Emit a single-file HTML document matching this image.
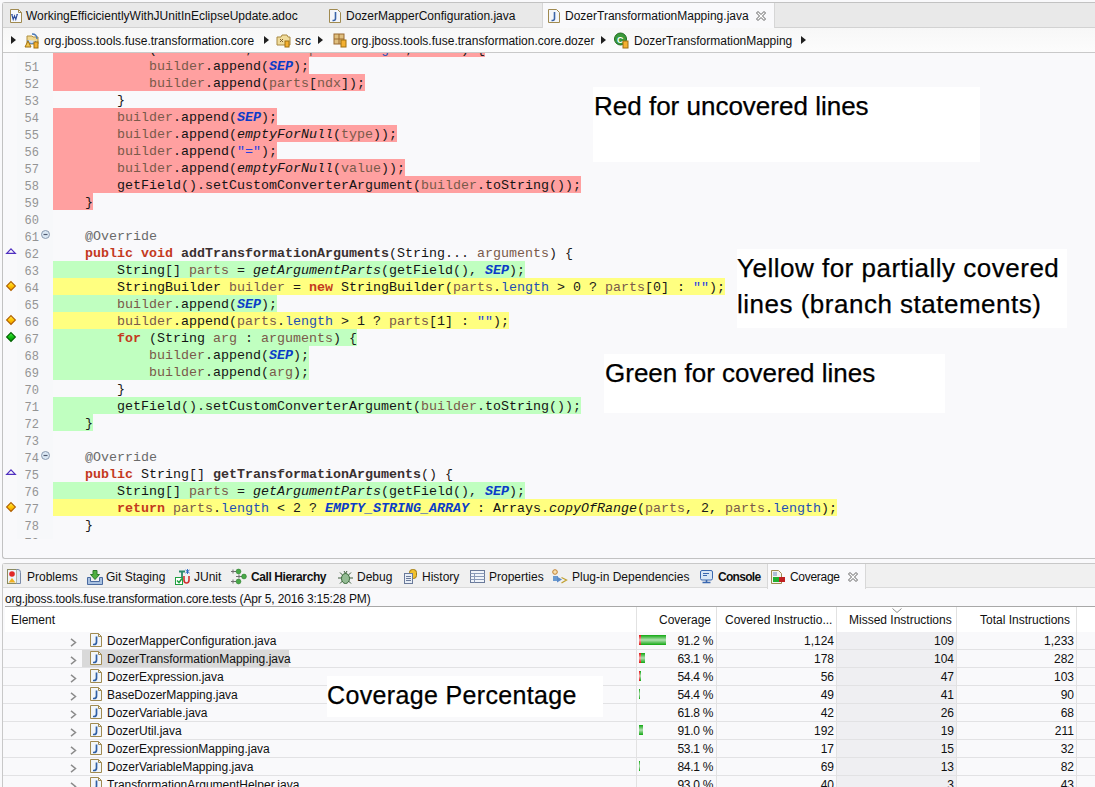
<!DOCTYPE html>
<html><head><meta charset="utf-8">
<style>
*{box-sizing:border-box}
html,body{margin:0;padding:0}
body{width:1095px;height:787px;overflow:hidden;position:relative;background:#f9f9fb;font-family:"Liberation Sans",sans-serif;font-size:12px;color:#101010}
.a{position:absolute}
svg{position:absolute;overflow:visible}
/* editor frame */
#edframe{position:absolute;left:2px;top:2px;width:1200px;height:557px;border:1px solid #c2c2c2;border-right:none;border-radius:3px 0 0 3px;background:#f9f9fb}
#tabbar{position:absolute;left:3px;top:3px;width:1200px;height:25px;background:#e9e9e9;border-bottom:1px solid #d2d2d2}
.tab{position:absolute;top:1px;height:25px;line-height:25px;white-space:nowrap}
#acttab{position:absolute;left:542px;top:3px;width:233px;height:25px;background:#f9f9fb;border-left:1px solid #d6d6d6;border-right:1px solid #d6d6d6}
#crumb{position:absolute;left:3px;top:28px;width:1200px;height:25px;background:linear-gradient(#f7f7f7,#fcfcfc);border-bottom:1px solid #c9c9c9}
.crt{position:absolute;top:1px;height:25px;line-height:25px;white-space:nowrap}
.tri{position:absolute;width:0;height:0;border-top:4px solid transparent;border-bottom:4px solid transparent;border-left:5px solid #202020}
/* code */
#code{position:absolute;left:3px;top:53px;width:1200px;height:486px;overflow:hidden}
#ruler{position:absolute;left:14px;top:0;width:36px;height:486px;background:#f7f8fa}
.ln{position:absolute;left:0;height:17px;width:1200px;font-family:"Liberation Mono",monospace;font-size:13.333px;line-height:17px;white-space:pre}
.ln .num{position:absolute;left:0;top:3px;width:36px;text-align:right;color:#949494;font-size:12px}
.ln .tx{position:absolute;left:50px;top:0;display:inline-block;height:17px;padding-top:1px;color:#1a1a1a}
.cr .tx{background:#ffa0a0}
.cg .tx{background:#c0ffc0}
.cy .tx{background:#ffff80}
.kw{color:#c43a1e;font-weight:bold}
.lv{color:#7a5a4a}
.ty{color:#141414}
.md{color:#141414}
.mdecl{color:#3a3030;font-weight:bold}
.sm{font-style:italic;color:#141414}
.sf{font-style:italic;font-weight:bold;color:#0a3cc8}
.fd{color:#1e50b4}
.str{color:#2a40e0}
.an{color:#6a6a6a}
/* annotations */
.note{position:absolute;background:#fff;font-family:"Liberation Sans",sans-serif;font-size:26px;color:#000;white-space:nowrap;-webkit-text-stroke:0.25px #000}
/* bottom panel */
#pframe{position:absolute;left:2px;top:563px;width:1200px;height:300px;border:1px solid #c8c8c8;border-right:none;border-radius:3px 0 0 0;background:#f9f9fb}
#ptabbar{position:absolute;left:3px;top:564px;width:1200px;height:24px;background:#f0f0f0;border-bottom:1px solid #dadada}
#pacttab{position:absolute;left:767px;top:564px;width:99px;height:25px;background:#f9f9fb;border-left:1px solid #d8d8d8;border-right:1px solid #d8d8d8}
.pt{position:absolute;top:565px;height:24px;line-height:24px;white-space:nowrap}
#desc{position:absolute;left:5px;top:589px;width:1200px;height:18px;line-height:20px;padding-left:0px;letter-spacing:-0.16px;border-bottom:1px solid #a8a8a8;background:#f9f9fb}
#thead{position:absolute;left:5px;top:607px;width:1200px;height:25px;background:#fff}
.th{position:absolute;top:608px;height:25px;line-height:25px;white-space:nowrap}
.vsep{position:absolute;width:1px;background:#e2e2e2}
#sortcol{position:absolute;left:837px;top:632px;width:119px;height:160px;background:#efeff2}
.row{position:absolute;left:3px;width:1200px;height:18px;border-bottom:1px solid #e2e2e4;white-space:nowrap}
.row > *{position:absolute}
.exp{left:67px;top:6px}
.jic{left:87px;top:1px}
.fname{left:104px;top:1px;line-height:17px;padding:0 1px 0 0}
.selbg{left:79px;top:0;width:207px;height:17px;background:#d9d9d9}
.bar{left:636px;top:3px;height:10px;background:linear-gradient(#10a810,#b0e0b0 50%,#10a810)}
.bar .red{position:absolute;left:0;top:0;height:10px;background:linear-gradient(#e01010,#f8b0b0 50%,#e01010)}
.c1,.c2,.c3,.c4{top:1px;line-height:17px;text-align:right}
.c1{left:633px;width:77px;letter-spacing:-0.3px}
.c2{left:713px;width:118px}
.c3{left:833px;width:118px}
.c4{left:953px;width:118px}
</style></head><body>
<svg width="0" height="0" style="position:absolute"><defs><linearGradient id="gy" x1="0" y1="0" x2="0" y2="1"><stop offset="0" stop-color="#ffe860"/><stop offset="0.5" stop-color="#ffc800"/><stop offset="1" stop-color="#f09000"/></linearGradient><linearGradient id="gg" x1="0" y1="0" x2="0" y2="1"><stop offset="0" stop-color="#50f050"/><stop offset="0.5" stop-color="#10c010"/><stop offset="1" stop-color="#008a00"/></linearGradient></defs></svg>
<div id="edframe"></div>
<div id="tabbar"></div>
<div id="acttab"></div>
<!-- tabs -->
<svg style="left:10px;top:9px" width="12" height="14" viewBox="0 0 12 14"><path d="M0.5 0.5h8l3 3v10h-11z" fill="#f6f8fc" stroke="#a08a50"/><path d="M8.5 0.5v3h3" fill="none" stroke="#a08a50"/><path d="M1.8 5.5l1.4 5 1.3-3.6 1.3 3.6 1.4-5" fill="none" stroke="#2a4a9a" stroke-width="1.1"/><path d="M1.2 5.5h1.5M6.5 5.5h1.5" stroke="#2a4a9a" stroke-width="0.8"/></svg>
<div class="tab" style="left:26px;top:4px">WorkingEfficicientlyWithJUnitInEclipseUpdate.adoc</div>
<svg style="left:329px;top:9px" width="12" height="14" viewBox="0 0 12 14"><path d="M0.5 0.5h8l3 3v10h-11z" fill="#f4f6fa" stroke="#a08a50"/><path d="M6.5 3v6.5q0 2-2 2h-1" fill="none" stroke="#3a64a8" stroke-width="1.6"/></svg>
<div class="tab" style="left:346px;top:4px">DozerMapperConfiguration.java</div>
<svg style="left:548px;top:9px" width="12" height="14" viewBox="0 0 12 14"><path d="M0.5 0.5h8l3 3v10h-11z" fill="#f4f6fa" stroke="#a08a50"/><path d="M6.5 3v6.5q0 2-2 2h-1" fill="none" stroke="#3a64a8" stroke-width="1.6"/></svg>
<div class="tab" style="left:565px;top:4px">DozerTransformationMapping.java</div>
<svg style="left:756px;top:11px" width="10" height="10" viewBox="0 0 10 10"><path d="M0.5 2l1.5-1.5 3 3 3-3 1.5 1.5-3 3 3 3-1.5 1.5-3-3-3 3-1.5-1.5 3-3z" fill="#fff" stroke="#606060" stroke-width="1"/></svg>
<!-- breadcrumb -->
<div id="crumb"></div>
<div class="tri" style="left:11px;top:36px"></div>
<svg style="left:24px;top:32px" width="16" height="16" viewBox="0 0 16 16"><path d="M3 4h5l1 1h5v7h-11z" fill="#f0d890" stroke="#b09040"/><path d="M8 2q5 0 5 5" fill="none" stroke="#4a7ab8" stroke-width="1.3"/><path d="M4 8a4 3 0 0 0 8 1" fill="#cfe0f4" stroke="#4a7ab8"/><path d="M1 15l3-6 3 6z" fill="#f4c850" stroke="#a07010"/><rect x="10" y="10" width="4" height="6" fill="#f4b030" stroke="#a07010"/></svg>
<div class="crt" style="left:44px;top:29px">org.jboss.tools.fuse.transformation.core</div>
<div class="tri" style="left:264px;top:36px"></div>
<svg style="left:276px;top:33px" width="15" height="14" viewBox="0 0 15 14"><path d="M1 4h4l1-2h5l1 2h2v8h-13z" fill="#f0dc9c" stroke="#a88840"/><path d="M4 6l3 3M7 6l-3 3" stroke="#806030"/><rect x="9" y="8" width="4" height="6" fill="#f4b030" stroke="#a07010"/></svg>
<div class="crt" style="left:295px;top:29px">src</div>
<div class="tri" style="left:318px;top:36px"></div>
<svg style="left:333px;top:33px" width="14" height="14" viewBox="0 0 14 14"><rect x="1" y="1" width="10" height="10" fill="#e0c080" stroke="#9a6a30"/><path d="M1 6h10M6 1v10" stroke="#9a6a30"/><rect x="8" y="7" width="5" height="7" fill="#f4b030" stroke="#a07010"/></svg>
<div class="crt" style="left:351px;top:29px">org.jboss.tools.fuse.transformation.core.dozer</div>
<div class="tri" style="left:601px;top:36px"></div>
<svg style="left:614px;top:32px" width="15" height="16" viewBox="0 0 15 16"><circle cx="6.5" cy="7" r="6" fill="#3a9a3a" stroke="#206a20"/><text x="3" y="11" font-size="9" font-weight="bold" font-family="Liberation Sans" fill="#fff">C</text><rect x="9" y="9" width="5" height="7" fill="#f4b030" stroke="#a07010"/></svg>
<div class="crt" style="left:634px;top:29px">DozerTransformationMapping</div>
<div class="tri" style="left:801px;top:36px"></div>
<!-- code -->
<div id="code">
<div id="ruler"></div>
<div class="ln cr" style="top:-13px"><span class="tx">        <span class="kw">for</span> (<span class="kw">int</span> <span class="lv">ndx</span> = 2; <span class="lv">ndx</span> &lt; <span class="lv">parts</span>.<span class="fd">length</span>; <span class="lv">ndx</span>++) {</span></div>
<div class="ln cr" style="top:4px"><span class="num">51</span><span class="tx">            <span class="lv">builder</span>.<span class="md">append</span>(<span class="sf">SEP</span>);</span></div>
<div class="ln cr" style="top:21px"><span class="num">52</span><span class="tx">            <span class="lv">builder</span>.<span class="md">append</span>(<span class="lv">parts</span>[<span class="lv">ndx</span>]);</span></div>
<div class="ln" style="top:38px"><span class="num">53</span><span class="tx">        }</span></div>
<div class="ln cr" style="top:55px"><span class="num">54</span><span class="tx">        <span class="lv">builder</span>.<span class="md">append</span>(<span class="sf">SEP</span>);</span></div>
<div class="ln cr" style="top:72px"><span class="num">55</span><span class="tx">        <span class="lv">builder</span>.<span class="md">append</span>(<span class="sm">emptyForNull</span>(<span class="lv">type</span>));</span></div>
<div class="ln cr" style="top:89px"><span class="num">56</span><span class="tx">        <span class="lv">builder</span>.<span class="md">append</span>(<span class="str">&quot;=&quot;</span>);</span></div>
<div class="ln cr" style="top:106px"><span class="num">57</span><span class="tx">        <span class="lv">builder</span>.<span class="md">append</span>(<span class="sm">emptyForNull</span>(<span class="lv">value</span>));</span></div>
<div class="ln cr" style="top:123px"><span class="num">58</span><span class="tx">        <span class="md">getField</span>().<span class="md">setCustomConverterArgument</span>(<span class="lv">builder</span>.<span class="md">toString</span>());</span></div>
<div class="ln cr" style="top:140px"><span class="num">59</span><span class="tx">    }</span></div>
<div class="ln" style="top:157px"><span class="num">60</span><span class="tx"></span></div>
<div class="ln" style="top:174px"><span class="num">61</span><span class="tx">    <span class="an">@Override</span></span></div>
<div class="ln" style="top:191px"><span class="num">62</span><span class="tx">    <span class="kw">public</span> <span class="kw">void</span> <span class="mdecl">addTransformationArguments</span>(<span class="ty">String</span>... <span class="lv">arguments</span>) {</span></div>
<div class="ln cg" style="top:208px"><span class="num">63</span><span class="tx">        <span class="ty">String</span>[] <span class="lv">parts</span> = <span class="sm">getArgumentParts</span>(<span class="md">getField</span>(), <span class="sf">SEP</span>);</span></div>
<div class="ln cy" style="top:225px"><span class="num">64</span><span class="tx">        <span class="ty">StringBuilder</span> <span class="lv">builder</span> = <span class="kw">new</span> <span class="ty">StringBuilder</span>(<span class="lv">parts</span>.<span class="fd">length</span> &gt; 0 ? <span class="lv">parts</span>[0] : <span class="str">&quot;&quot;</span>);</span></div>
<div class="ln cg" style="top:242px"><span class="num">65</span><span class="tx">        <span class="lv">builder</span>.<span class="md">append</span>(<span class="sf">SEP</span>);</span></div>
<div class="ln cy" style="top:259px"><span class="num">66</span><span class="tx">        <span class="lv">builder</span>.<span class="md">append</span>(<span class="lv">parts</span>.<span class="fd">length</span> &gt; 1 ? <span class="lv">parts</span>[1] : <span class="str">&quot;&quot;</span>);</span></div>
<div class="ln cg" style="top:276px"><span class="num">67</span><span class="tx">        <span class="kw">for</span> (<span class="ty">String</span> <span class="lv">arg</span> : <span class="lv">arguments</span>) {</span></div>
<div class="ln cg" style="top:293px"><span class="num">68</span><span class="tx">            <span class="lv">builder</span>.<span class="md">append</span>(<span class="sf">SEP</span>);</span></div>
<div class="ln cg" style="top:310px"><span class="num">69</span><span class="tx">            <span class="lv">builder</span>.<span class="md">append</span>(<span class="lv">arg</span>);</span></div>
<div class="ln" style="top:327px"><span class="num">70</span><span class="tx">        }</span></div>
<div class="ln cg" style="top:344px"><span class="num">71</span><span class="tx">        <span class="md">getField</span>().<span class="md">setCustomConverterArgument</span>(<span class="lv">builder</span>.<span class="md">toString</span>());</span></div>
<div class="ln cg" style="top:361px"><span class="num">72</span><span class="tx">    }</span></div>
<div class="ln" style="top:378px"><span class="num">73</span><span class="tx"></span></div>
<div class="ln" style="top:395px"><span class="num">74</span><span class="tx">    <span class="an">@Override</span></span></div>
<div class="ln" style="top:412px"><span class="num">75</span><span class="tx">    <span class="kw">public</span> <span class="ty">String</span>[] <span class="mdecl">getTransformationArguments</span>() {</span></div>
<div class="ln cg" style="top:429px"><span class="num">76</span><span class="tx">        <span class="ty">String</span>[] <span class="lv">parts</span> = <span class="sm">getArgumentParts</span>(<span class="md">getField</span>(), <span class="sf">SEP</span>);</span></div>
<div class="ln cy" style="top:446px"><span class="num">77</span><span class="tx">        <span class="kw">return</span> <span class="lv">parts</span>.<span class="fd">length</span> &lt; 2 ? <span class="sf">EMPTY_STRING_ARRAY</span> : <span class="ty">Arrays</span>.<span class="sm">copyOfRange</span>(<span class="lv">parts</span>, 2, <span class="lv">parts</span>.<span class="fd">length</span>);</span></div>
<div class="ln" style="top:463px"><span class="num">78</span><span class="tx">    }</span></div>
<div class="ln" style="top:480px"><span class="num">79</span><span class="tx"></span></div>
</div>
<!-- ruler icons -->
<svg style="left:41px;top:230px" width="9" height="9" viewBox="0 0 9 9"><circle cx="4.5" cy="4.5" r="4" fill="#dbe8f4" stroke="#8a9ab0"/><path d="M2.5 4.5h4" stroke="#505a70" stroke-width="1.2"/></svg>
<svg style="left:41px;top:451px" width="9" height="9" viewBox="0 0 9 9"><circle cx="4.5" cy="4.5" r="4" fill="#dbe8f4" stroke="#8a9ab0"/><path d="M2.5 4.5h4" stroke="#505a70" stroke-width="1.2"/></svg>
<svg style="left:6px;top:248px" width="10" height="6" viewBox="0 0 10 6"><path d="M5 0.8L9.3 5.3H0.7z" fill="none" stroke="#5030c0" stroke-width="1.2"/></svg>
<svg style="left:6px;top:469px" width="10" height="6" viewBox="0 0 10 6"><path d="M5 0.8L9.3 5.3H0.7z" fill="none" stroke="#5030c0" stroke-width="1.2"/></svg>
<svg style="left:6px;top:281px" width="10" height="10" viewBox="0 0 10 10"><path d="M5 0.6L9.4 5 5 9.4 0.6 5z" fill="url(#gy)" stroke="#b06000" stroke-width="1.1"/></svg>
<svg style="left:6px;top:315px" width="10" height="10" viewBox="0 0 10 10"><path d="M5 0.6L9.4 5 5 9.4 0.6 5z" fill="url(#gy)" stroke="#b06000" stroke-width="1.1"/></svg>
<svg style="left:6px;top:332px" width="10" height="10" viewBox="0 0 10 10"><path d="M5 0.6L9.4 5 5 9.4 0.6 5z" fill="url(#gg)" stroke="#006000" stroke-width="1.1"/></svg>
<svg style="left:6px;top:502px" width="10" height="10" viewBox="0 0 10 10"><path d="M5 0.6L9.4 5 5 9.4 0.6 5z" fill="url(#gy)" stroke="#b06000" stroke-width="1.1"/></svg>
<!-- notes -->
<div class="note" style="left:593px;top:87px;width:387px;height:75px"><span class="a" style="left:1px;top:4px">Red for uncovered lines</span></div>
<div class="note" style="left:737px;top:249px;width:330px;height:79px"><span class="a" style="left:0px;top:1px;line-height:36px;letter-spacing:0.5px">Yellow for partially covered<br>lines (branch statements)</span></div>
<div class="note" style="left:604px;top:354px;width:341px;height:59px"><span class="a" style="left:1px;top:4px">Green for covered lines</span></div>
<!-- bottom panel -->
<div id="pframe"></div>
<div id="ptabbar"></div>
<div id="pacttab"></div>
<svg style="left:7px;top:569px" width="14" height="15" viewBox="0 0 14 15"><rect x="0.5" y="0.5" width="9" height="14" fill="#eef4fa" stroke="#8a8a60"/><path d="M9.5 0.5h1.5q2.5 0 2.5 3v11h-4" fill="#dde8f4" stroke="#7a8aa8"/><circle cx="5" cy="5" r="2.8" fill="#e02828"/><path d="M1.5 13.5l3.5-4.5 3.5 4.5z" fill="#f0b020"/></svg>
<div class="pt" style="left:27px">Problems</div>
<svg style="left:87px;top:570px" width="16" height="15" viewBox="0 0 16 15"><path d="M0.5 7.5v7h15v-7h-3v4h-9v-4z" fill="#a8c0e0" stroke="#4a6aa0"/><path d="M6 0.5h4v4h2.5l-4.5 5-4.5-5h2.5z" fill="#50b040" stroke="#2a7a2a"/></svg>
<div class="pt" style="left:106px">Git Staging</div>
<svg style="left:175px;top:569px" width="16" height="16" viewBox="0 0 16 16"><rect x="0.5" y="8.5" width="7" height="7" fill="#fff" stroke="#20a040"/><path d="M2 11.5l2 2 3-4" stroke="#20a040" fill="none" stroke-width="1.5"/><path d="M4 2.5h6M7 2.5v6" stroke="#2a8a6a" stroke-width="1.8"/><path d="M9 7v4q0 3 2.5 3t2.5-3v-4" stroke="#d03030" fill="none" stroke-width="1.6"/><path d="M12.5 0v5M10.5 1l4 3M14.5 1l-4 3" stroke="#2060c0" stroke-width="0.9"/></svg>
<div class="pt" style="left:194px">JUnit</div>
<svg style="left:231px;top:569px" width="16" height="15" viewBox="0 0 16 15"><path d="M0 2.5h5M0 12.5h5M5 7.5h6M2 0.5v4M2 10.5v4M8 5.5v4" stroke="#707070"/><circle cx="7.5" cy="2.5" r="2.4" fill="#48a848" stroke="#2a7a2a" stroke-width="0.6"/><circle cx="7.5" cy="12.5" r="2.4" fill="#48a848" stroke="#2a7a2a" stroke-width="0.6"/><circle cx="13" cy="7.5" r="2.4" fill="#48a848" stroke="#2a7a2a" stroke-width="0.6"/></svg>
<div class="pt" style="left:251px;font-weight:bold;letter-spacing:-0.4px">Call Hierarchy</div>
<svg style="left:338px;top:570px" width="15" height="15" viewBox="0 0 15 15"><path d="M2 2.5l3 3M13 2.5l-3 3M0 8h15M2 13.5l3-3M13 13.5l-3-3M6 1l1.5 2.5M9 1l-1.5 2.5" stroke="#3a5a3a" stroke-width="1"/><ellipse cx="7.5" cy="8.5" rx="4" ry="5" fill="#94bc94" stroke="#3a6a3a"/></svg>
<div class="pt" style="left:357px">Debug</div>
<svg style="left:404px;top:569px" width="13" height="15" viewBox="0 0 13 15"><rect x="5.5" y="0.5" width="7" height="9" rx="3" fill="#f0c030" stroke="#a07a10"/><rect x="0.5" y="4.5" width="8" height="10" fill="#e8eef6" stroke="#6a7a9a"/><path d="M2 7.5h5M2 9.5h5M2 11.5h5" stroke="#6a7a9a"/></svg>
<div class="pt" style="left:422px">History</div>
<svg style="left:470px;top:570px" width="15" height="13" viewBox="0 0 15 13"><rect x="0.5" y="0.5" width="14" height="12" fill="#f0f4fa" stroke="#6a7a9a"/><path d="M0.5 3.5h14M0.5 6.5h14M0.5 9.5h14M4.5 3.5v9" stroke="#8a9ab8"/></svg>
<div class="pt" style="left:489px">Properties</div>
<svg style="left:552px;top:569px" width="16" height="16" viewBox="0 0 16 16"><circle cx="3" cy="3" r="2.3" fill="#f8e0b0" stroke="#c08030"/><path d="M1 7h5v5h-5z" fill="#6a9ad0"/><path d="M5 7.5l5 3-5 3z" fill="#5a8ac8"/><path d="M9.5 8.5l5 2.5-5 3" fill="none" stroke="#c0a030" stroke-width="1.3"/></svg>
<div class="pt" style="left:572px">Plug-in Dependencies</div>
<svg style="left:700px;top:570px" width="13" height="14" viewBox="0 0 13 14"><rect x="0.5" y="0.5" width="12" height="9.5" rx="1.5" fill="#d8e6f6" stroke="#3a68b0"/><path d="M3 3.5h6M3 5.5h4" stroke="#3a68b0"/><path d="M2.5 12.5h8M6.5 10v2.5" stroke="#3a68b0" stroke-width="1.6"/></svg>
<div class="pt" style="left:718px;font-weight:bold;letter-spacing:-0.7px">Console</div>
<svg style="left:771px;top:570px" width="15" height="14" viewBox="0 0 15 14"><path d="M0.5 0.5h7l3 3v10h-10z" fill="#f4f4f0" stroke="#a08a50"/><path d="M2 3h4M2 5h4" stroke="#6a8ac0"/><rect x="2" y="7" width="7" height="5" fill="#20b030"/><rect x="8" y="7" width="6" height="5" fill="#c02020"/></svg>
<div class="pt" style="left:790px;letter-spacing:-0.3px">Coverage</div>
<svg style="left:848px;top:572px" width="10" height="10" viewBox="0 0 10 10"><path d="M0.5 2l1.5-1.5 3 3 3-3 1.5 1.5-3 3 3 3-1.5 1.5-3-3-3 3-1.5-1.5 3-3z" fill="#fff" stroke="#606060" stroke-width="1"/></svg>
<div id="desc">org.jboss.tools.fuse.transformation.core.tests (Apr 5, 2016 3:15:28 PM)</div>
<div id="thead"></div>
<div id="sortcol"></div>
<div class="th" style="left:11px">Element</div>
<div class="th" style="left:637px;width:74px;text-align:right">Coverage</div>
<div class="th" style="left:725px">Covered Instructio...</div>
<div class="th" style="left:849px">Missed Instructions</div>
<div class="th" style="left:980px">Total Instructions</div>
<div class="vsep" style="left:636px;top:607px;height:180px"></div>
<div class="vsep" style="left:716px;top:607px;height:180px"></div>
<div class="vsep" style="left:836px;top:607px;height:180px"></div>
<div class="vsep" style="left:956px;top:607px;height:180px"></div>
<div class="vsep" style="left:1076px;top:607px;height:180px"></div>
<svg style="left:892px;top:608px" width="10" height="5" viewBox="0 0 10 5"><path d="M0.5 0.5L5 4.5 9.5 0.5" fill="none" stroke="#909090"/></svg>
<div class="row" style="top:632px"><svg class="exp" width="7" height="9" viewBox="0 0 7 9"><path d="M1 0.8l4.5 3.7L1 8.2" fill="none" stroke="#8c8c8c" stroke-width="1.5"/></svg><svg class="jic" width="12" height="14" viewBox="0 0 12 14"><path d="M0.5 0.5h8l3 3v10h-11z" fill="#f2f6fa" stroke="#a08a50"/><path d="M8.5 0.5v3h3" fill="none" stroke="#a08a50"/><path d="M6.5 3.5v5.5q0 2.5-2.5 2.5h-1" fill="none" stroke="#2f5fa5" stroke-width="1.7"/></svg><span class="fname">DozerMapperConfiguration.java</span><span class="bar" style="width:27px"><span class="red" style="width:2px"></span></span><span class="c1">91.2 %</span><span class="c2">1,124</span><span class="c3">109</span><span class="c4">1,233</span></div>
<div class="row" style="top:650px"><div class="selbg"></div><svg class="exp" width="7" height="9" viewBox="0 0 7 9"><path d="M1 0.8l4.5 3.7L1 8.2" fill="none" stroke="#8c8c8c" stroke-width="1.5"/></svg><svg class="jic" width="12" height="14" viewBox="0 0 12 14"><path d="M0.5 0.5h8l3 3v10h-11z" fill="#f2f6fa" stroke="#a08a50"/><path d="M8.5 0.5v3h3" fill="none" stroke="#a08a50"/><path d="M6.5 3.5v5.5q0 2.5-2.5 2.5h-1" fill="none" stroke="#2f5fa5" stroke-width="1.7"/></svg><span class="fname">DozerTransformationMapping.java</span><span class="bar" style="width:6px"><span class="red" style="width:2px"></span></span><span class="c1">63.1 %</span><span class="c2">178</span><span class="c3">104</span><span class="c4">282</span></div>
<div class="row" style="top:668px"><svg class="exp" width="7" height="9" viewBox="0 0 7 9"><path d="M1 0.8l4.5 3.7L1 8.2" fill="none" stroke="#8c8c8c" stroke-width="1.5"/></svg><svg class="jic" width="12" height="14" viewBox="0 0 12 14"><path d="M0.5 0.5h8l3 3v10h-11z" fill="#f2f6fa" stroke="#a08a50"/><path d="M8.5 0.5v3h3" fill="none" stroke="#a08a50"/><path d="M6.5 3.5v5.5q0 2.5-2.5 2.5h-1" fill="none" stroke="#2f5fa5" stroke-width="1.7"/></svg><span class="fname">DozerExpression.java</span><span class="bar" style="width:2px"><span class="red" style="width:1px"></span></span><span class="c1">54.4 %</span><span class="c2">56</span><span class="c3">47</span><span class="c4">103</span></div>
<div class="row" style="top:686px"><svg class="exp" width="7" height="9" viewBox="0 0 7 9"><path d="M1 0.8l4.5 3.7L1 8.2" fill="none" stroke="#8c8c8c" stroke-width="1.5"/></svg><svg class="jic" width="12" height="14" viewBox="0 0 12 14"><path d="M0.5 0.5h8l3 3v10h-11z" fill="#f2f6fa" stroke="#a08a50"/><path d="M8.5 0.5v3h3" fill="none" stroke="#a08a50"/><path d="M6.5 3.5v5.5q0 2.5-2.5 2.5h-1" fill="none" stroke="#2f5fa5" stroke-width="1.7"/></svg><span class="fname">BaseDozerMapping.java</span><span class="bar" style="width:1px"><span class="red" style="width:0px"></span></span><span class="c1">54.4 %</span><span class="c2">49</span><span class="c3">41</span><span class="c4">90</span></div>
<div class="row" style="top:704px"><svg class="exp" width="7" height="9" viewBox="0 0 7 9"><path d="M1 0.8l4.5 3.7L1 8.2" fill="none" stroke="#8c8c8c" stroke-width="1.5"/></svg><svg class="jic" width="12" height="14" viewBox="0 0 12 14"><path d="M0.5 0.5h8l3 3v10h-11z" fill="#f2f6fa" stroke="#a08a50"/><path d="M8.5 0.5v3h3" fill="none" stroke="#a08a50"/><path d="M6.5 3.5v5.5q0 2.5-2.5 2.5h-1" fill="none" stroke="#2f5fa5" stroke-width="1.7"/></svg><span class="fname">DozerVariable.java</span><span class="c1">61.8 %</span><span class="c2">42</span><span class="c3">26</span><span class="c4">68</span></div>
<div class="row" style="top:722px"><svg class="exp" width="7" height="9" viewBox="0 0 7 9"><path d="M1 0.8l4.5 3.7L1 8.2" fill="none" stroke="#8c8c8c" stroke-width="1.5"/></svg><svg class="jic" width="12" height="14" viewBox="0 0 12 14"><path d="M0.5 0.5h8l3 3v10h-11z" fill="#f2f6fa" stroke="#a08a50"/><path d="M8.5 0.5v3h3" fill="none" stroke="#a08a50"/><path d="M6.5 3.5v5.5q0 2.5-2.5 2.5h-1" fill="none" stroke="#2f5fa5" stroke-width="1.7"/></svg><span class="fname">DozerUtil.java</span><span class="bar" style="width:4px"><span class="red" style="width:0px"></span></span><span class="c1">91.0 %</span><span class="c2">192</span><span class="c3">19</span><span class="c4">211</span></div>
<div class="row" style="top:740px"><svg class="exp" width="7" height="9" viewBox="0 0 7 9"><path d="M1 0.8l4.5 3.7L1 8.2" fill="none" stroke="#8c8c8c" stroke-width="1.5"/></svg><svg class="jic" width="12" height="14" viewBox="0 0 12 14"><path d="M0.5 0.5h8l3 3v10h-11z" fill="#f2f6fa" stroke="#a08a50"/><path d="M8.5 0.5v3h3" fill="none" stroke="#a08a50"/><path d="M6.5 3.5v5.5q0 2.5-2.5 2.5h-1" fill="none" stroke="#2f5fa5" stroke-width="1.7"/></svg><span class="fname">DozerExpressionMapping.java</span><span class="c1">53.1 %</span><span class="c2">17</span><span class="c3">15</span><span class="c4">32</span></div>
<div class="row" style="top:758px"><svg class="exp" width="7" height="9" viewBox="0 0 7 9"><path d="M1 0.8l4.5 3.7L1 8.2" fill="none" stroke="#8c8c8c" stroke-width="1.5"/></svg><svg class="jic" width="12" height="14" viewBox="0 0 12 14"><path d="M0.5 0.5h8l3 3v10h-11z" fill="#f2f6fa" stroke="#a08a50"/><path d="M8.5 0.5v3h3" fill="none" stroke="#a08a50"/><path d="M6.5 3.5v5.5q0 2.5-2.5 2.5h-1" fill="none" stroke="#2f5fa5" stroke-width="1.7"/></svg><span class="fname">DozerVariableMapping.java</span><span class="bar" style="width:1px"><span class="red" style="width:0px"></span></span><span class="c1">84.1 %</span><span class="c2">69</span><span class="c3">13</span><span class="c4">82</span></div>
<div class="row" style="top:776px"><svg class="exp" width="7" height="9" viewBox="0 0 7 9"><path d="M1 0.8l4.5 3.7L1 8.2" fill="none" stroke="#8c8c8c" stroke-width="1.5"/></svg><svg class="jic" width="12" height="14" viewBox="0 0 12 14"><path d="M0.5 0.5h8l3 3v10h-11z" fill="#f2f6fa" stroke="#a08a50"/><path d="M8.5 0.5v3h3" fill="none" stroke="#a08a50"/><path d="M6.5 3.5v5.5q0 2.5-2.5 2.5h-1" fill="none" stroke="#2f5fa5" stroke-width="1.7"/></svg><span class="fname">TransformationArgumentHelper.java</span><span class="c1">93.0 %</span><span class="c2">40</span><span class="c3">3</span><span class="c4">43</span></div>
<div class="note" style="left:327px;top:676px;width:276px;height:41px;font-size:25px"><span class="a" style="left:0px;top:5px;letter-spacing:0.35px">Coverage Percentage</span></div>
</body></html>
